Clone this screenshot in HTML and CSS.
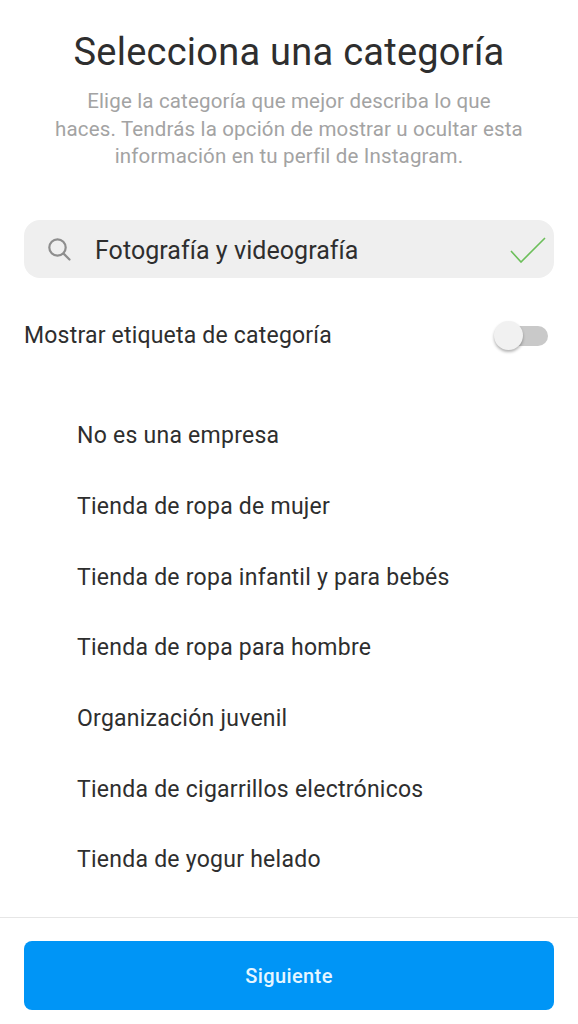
FILE: index.html
```html
<!DOCTYPE html>
<html lang="es">
<head>
<meta charset="utf-8">
<title>Selecciona una categoría</title>
<link rel="stylesheet" href="styles.css">
</head>
<body>
<main class="screen">
  <div class="content">
    <h1 class="title">Selecciona una categoría</h1>
    <p class="subtitle">Elige la categoría que mejor describa lo que<br>haces. Tendrás la opción de mostrar u ocultar esta<br>información en tu perfil de Instagram.</p>
    <div class="search">
      <svg class="search-icon" viewBox="0 0 24 24" width="24" height="24" fill="none" stroke="#8e8e8e" stroke-width="2.2" stroke-linecap="round"><circle cx="10.5" cy="10.5" r="8.2"/><path d="M16.6 16.6L22.5 22.5"/></svg>
      <span class="search-text">Fotografía y videografía</span>
      <svg class="check" viewBox="0 0 36 26" width="36" height="26" fill="none" stroke="#6cbf5a" stroke-width="1.6"><path d="M1 14L11 25L35 1"/></svg>
    </div>
    <div class="toggle-row">
      <span>Mostrar etiqueta de categoría</span>
      <span class="switch"><span class="knob"></span></span>
    </div>
    <ul class="list">
      <li>No es una empresa</li>
      <li>Tienda de ropa de mujer</li>
      <li>Tienda de ropa infantil y para bebés</li>
      <li>Tienda de ropa para hombre</li>
      <li>Organización juvenil</li>
      <li>Tienda de cigarrillos electrónicos</li>
      <li>Tienda de yogur helado</li>
    </ul>
  </div>
  <footer class="footer">
    <button class="next" type="button">Siguiente</button>
  </footer>
</main>
</body>
</html>
```
FILE: styles.css
```css
* { box-sizing: border-box; }
html, body { margin: 0; padding: 0; background: #fff; }
body { font-family: Roboto, "Liberation Sans", sans-serif; color: #2e2e2e; }
.screen { width: 578px; height: 1024px; display: flex; flex-direction: column; overflow: hidden; }
.content { flex: 1; padding: 28px 24px 0; min-height: 0; }
.title { margin: 0; font-size: 38px; line-height: 48px; font-weight: 400; text-align: center; letter-spacing: 0.25px; }
.subtitle { margin: 12px -10px 0; font-size: 20.5px; line-height: 27.5px; color: #a3a3a3; text-align: center; letter-spacing: 0.16px; }
.search { margin-top: 49px; height: 58px; border-radius: 16px; background: #efefef; display: flex; align-items: center; padding: 0 8px 0 23px; }
.search-icon { flex: none; }
.search-text { flex: 1; margin-top: 4px; margin-left: 24px; font-size: 25px; letter-spacing: 0.05px; }
.check { flex: none; margin-top: 2px; }
.toggle-row { margin-top: 28px; height: 60px; display: flex; align-items: center; justify-content: space-between; font-size: 23px; letter-spacing: 0.2px; padding-right: 6px; }
.switch { position: relative; width: 50px; height: 20px; border-radius: 10px; background: #c9c9c9; }
.knob { position: absolute; left: -4px; top: -5px; width: 29px; height: 29px; border-radius: 50%; background: #f1f1f1; box-shadow: 0 2px 3px rgba(0,0,0,.3); }
.list { list-style: none; margin: 35px 0 0; padding: 0 0 0 53px; }
.list li { height: 70.67px; display: flex; align-items: center; font-size: 23px; letter-spacing: 0.25px; }
.footer { flex: none; height: 107px; border-top: 1px solid #e6e6e6; padding: 23px 24px 0; }
.next { display: block; width: 100%; height: 69px; border: 0; border-radius: 8px; background: #0095f6; color: #e6f6ff; font-family: inherit; font-size: 20px; font-weight: 500; letter-spacing: 0.4px; }
```
